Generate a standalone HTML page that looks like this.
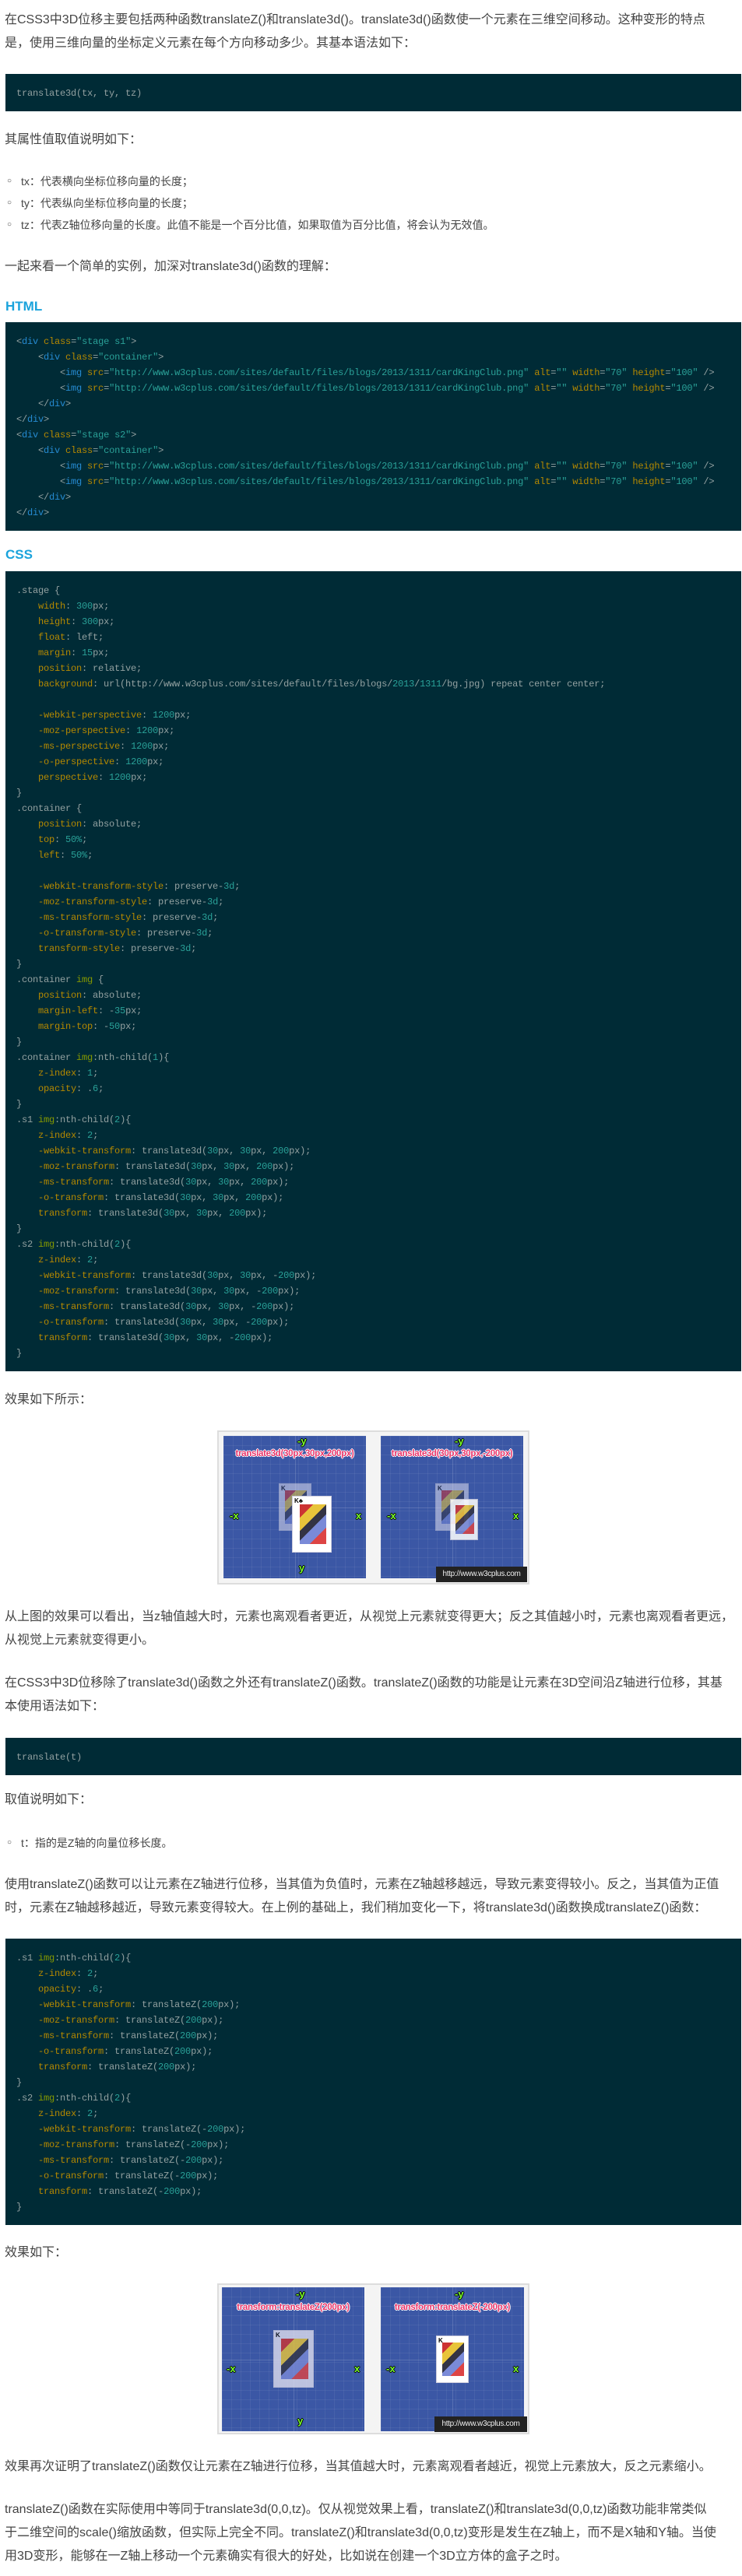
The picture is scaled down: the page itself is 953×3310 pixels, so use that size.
<!DOCTYPE html>
<html><head><meta charset="utf-8">
<style>
*{margin:0;padding:0;box-sizing:border-box}
html,body{width:953px;height:3310px;background:#fff;overflow:hidden}
body{position:relative;font-family:"Liberation Sans","Noto Sans CJK SC",sans-serif;color:#444}
.t{position:absolute;left:6px;font-size:16px;line-height:30px;white-space:nowrap}
.li{position:absolute;left:9px;font-size:14px;line-height:28px;white-space:nowrap}
.li span{display:inline-block;width:18px;font-size:10px;vertical-align:top}
.h{position:absolute;left:7px;font-size:17px;line-height:24px;font-weight:bold;color:#1aa3dc}
pre{position:absolute;left:7px;width:945px;background:#002b36;color:#93a1a1;font-family:"Liberation Mono",monospace;font-size:12px;letter-spacing:-0.2px;line-height:20px;padding:15px 14px 13px;overflow:hidden}
.p{color:#b58900}.v{color:#2aa198}.g{color:#268bd2}.s{color:#859900}
.fig{position:absolute;left:279px;width:401px;border:2px solid #ddd;background:#f4f4f4}
.pn{position:absolute;background:#3b57a5;overflow:visible;
background-image:linear-gradient(rgba(255,255,255,.06) 1px,transparent 1px),linear-gradient(90deg,rgba(255,255,255,.06) 1px,transparent 1px);background-size:12px 12px}
.pn:before{content:"";position:absolute;left:50%;top:0;bottom:0;width:1px;background:rgba(255,255,255,.15)}
.pn:after{content:"";position:absolute;top:50%;left:0;right:0;height:1px;background:rgba(255,255,255,.15)}
.ax{position:absolute;color:#7cff2a;font-weight:bold;font-size:13px;line-height:14px;text-shadow:-1px 0 #000,1px 0 #000,0 -1px #000,0 1px #000;z-index:3}
.ti{position:absolute;left:0;right:0;text-align:center;font-weight:bold;font-size:11.5px;letter-spacing:-.3px;color:#e8356a;text-shadow:-1px 0 #fff,1px 0 #fff,0 -1px #fff,0 1px #fff;z-index:3;white-space:nowrap}
.cd{position:absolute;background:#fff;border:1px solid #ccd;z-index:2;overflow:hidden}
.cd i{position:absolute;left:18%;right:12%;top:14%;bottom:14%;background:linear-gradient(135deg,#c33 0 20%,#e8c43a 20% 40%,#334 40% 55%,#7a8ad8 55% 75%,#d44 75%)}
.cd b{position:absolute;left:2px;top:1px;font-size:8px;color:#000}
.bk{opacity:.55;background:#dde}
.wm{position:absolute;background:#222;color:#eee;font-size:10px;line-height:20px;text-align:center;z-index:4;letter-spacing:-.3px}
</style></head><body>

<div class="t" style="top:11px">在CSS3中3D位移主要包括两种函数translateZ()和translate3d()。translate3d()函数使一个元素在三维空间移动。这种变形的特点<br>是，使用三维向量的坐标定义元素在每个方向移动多少。其基本语法如下：</div>

<pre style="top:95px">translate3d(tx, ty, tz)</pre>

<div class="t" style="top:165px">其属性值取值说明如下：</div>
<div class="li" style="top:219px"><span>○</span>tx：代表横向坐标位移向量的长度；<br><span>○</span>ty：代表纵向坐标位移向量的长度；<br><span>○</span>tz：代表Z轴位移向量的长度。此值不能是一个百分比值，如果取值为百分比值，将会认为无效值。</div>
<div class="t" style="top:328px">一起来看一个简单的实例，加深对translate3d()函数的理解：</div>

<div class="h" style="top:382px">HTML</div>
<pre style="top:414px">&lt;<span class="g">div</span> <span class="p">class</span>=<span class="v">"stage s1"</span>&gt;
    &lt;<span class="g">div</span> <span class="p">class</span>=<span class="v">"container"</span>&gt;
        &lt;<span class="g">img</span> <span class="p">src</span>=<span class="v">"http://www.w3cplus.com/sites/default/files/blogs/2013/1311/cardKingClub.png"</span> <span class="p">alt</span>=<span class="v">""</span> <span class="p">width</span>=<span class="v">"70"</span> <span class="p">height</span>=<span class="v">"100"</span> /&gt;
        &lt;<span class="g">img</span> <span class="p">src</span>=<span class="v">"http://www.w3cplus.com/sites/default/files/blogs/2013/1311/cardKingClub.png"</span> <span class="p">alt</span>=<span class="v">""</span> <span class="p">width</span>=<span class="v">"70"</span> <span class="p">height</span>=<span class="v">"100"</span> /&gt;
    &lt;/<span class="g">div</span>&gt;
&lt;/<span class="g">div</span>&gt;
&lt;<span class="g">div</span> <span class="p">class</span>=<span class="v">"stage s2"</span>&gt;
    &lt;<span class="g">div</span> <span class="p">class</span>=<span class="v">"container"</span>&gt;
        &lt;<span class="g">img</span> <span class="p">src</span>=<span class="v">"http://www.w3cplus.com/sites/default/files/blogs/2013/1311/cardKingClub.png"</span> <span class="p">alt</span>=<span class="v">""</span> <span class="p">width</span>=<span class="v">"70"</span> <span class="p">height</span>=<span class="v">"100"</span> /&gt;
        &lt;<span class="g">img</span> <span class="p">src</span>=<span class="v">"http://www.w3cplus.com/sites/default/files/blogs/2013/1311/cardKingClub.png"</span> <span class="p">alt</span>=<span class="v">""</span> <span class="p">width</span>=<span class="v">"70"</span> <span class="p">height</span>=<span class="v">"100"</span> /&gt;
    &lt;/<span class="g">div</span>&gt;
&lt;/<span class="g">div</span>&gt;</pre>

<div class="h" style="top:701px">CSS</div>
<pre style="top:734px">.stage {
    <span class="p">width</span>: <span class="v">300</span>px;
    <span class="p">height</span>: <span class="v">300</span>px;
    <span class="p">float</span>: left;
    <span class="p">margin</span>: <span class="v">15</span>px;
    <span class="p">position</span>: relative;
    <span class="p">background</span>: url(http://www.w3cplus.com/sites/default/files/blogs/<span class="v">2013</span>/<span class="v">1311</span>/bg.jpg) repeat center center;

    <span class="p">-webkit-perspective</span>: <span class="v">1200</span>px;
    <span class="p">-moz-perspective</span>: <span class="v">1200</span>px;
    <span class="p">-ms-perspective</span>: <span class="v">1200</span>px;
    <span class="p">-o-perspective</span>: <span class="v">1200</span>px;
    <span class="p">perspective</span>: <span class="v">1200</span>px;
}
.container {
    <span class="p">position</span>: absolute;
    <span class="p">top</span>: <span class="v">50%</span>;
    <span class="p">left</span>: <span class="v">50%</span>;

    <span class="p">-webkit-transform-style</span>: preserve-<span class="v">3d</span>;
    <span class="p">-moz-transform-style</span>: preserve-<span class="v">3d</span>;
    <span class="p">-ms-transform-style</span>: preserve-<span class="v">3d</span>;
    <span class="p">-o-transform-style</span>: preserve-<span class="v">3d</span>;
    <span class="p">transform-style</span>: preserve-<span class="v">3d</span>;
}
.container <span class="s">img</span> {
    <span class="p">position</span>: absolute;
    <span class="p">margin-left</span>: -<span class="v">35</span>px;
    <span class="p">margin-top</span>: -<span class="v">50</span>px;
}
.container <span class="s">img</span>:nth-child(<span class="v">1</span>){
    <span class="p">z-index</span>: <span class="v">1</span>;
    <span class="p">opacity</span>: .<span class="v">6</span>;
}
.s1 <span class="s">img</span>:nth-child(<span class="v">2</span>){
    <span class="p">z-index</span>: <span class="v">2</span>;
    <span class="p">-webkit-transform</span>: translate3d(<span class="v">30</span>px, <span class="v">30</span>px, <span class="v">200</span>px);
    <span class="p">-moz-transform</span>: translate3d(<span class="v">30</span>px, <span class="v">30</span>px, <span class="v">200</span>px);
    <span class="p">-ms-transform</span>: translate3d(<span class="v">30</span>px, <span class="v">30</span>px, <span class="v">200</span>px);
    <span class="p">-o-transform</span>: translate3d(<span class="v">30</span>px, <span class="v">30</span>px, <span class="v">200</span>px);
    <span class="p">transform</span>: translate3d(<span class="v">30</span>px, <span class="v">30</span>px, <span class="v">200</span>px);
}
.s2 <span class="s">img</span>:nth-child(<span class="v">2</span>){
    <span class="p">z-index</span>: <span class="v">2</span>;
    <span class="p">-webkit-transform</span>: translate3d(<span class="v">30</span>px, <span class="v">30</span>px, -<span class="v">200</span>px);
    <span class="p">-moz-transform</span>: translate3d(<span class="v">30</span>px, <span class="v">30</span>px, -<span class="v">200</span>px);
    <span class="p">-ms-transform</span>: translate3d(<span class="v">30</span>px, <span class="v">30</span>px, -<span class="v">200</span>px);
    <span class="p">-o-transform</span>: translate3d(<span class="v">30</span>px, <span class="v">30</span>px, -<span class="v">200</span>px);
    <span class="p">transform</span>: translate3d(<span class="v">30</span>px, <span class="v">30</span>px, -<span class="v">200</span>px);
}</pre>

<div class="t" style="top:1784px">效果如下所示：</div>

<div class="fig" style="top:1838px;height:198px"></div>
<div class="pn" style="left:287px;top:1845px;width:183px;height:183px">
  <div class="ax" style="left:95px;top:0">-y</div>
  <div class="ti" style="top:17px">translate3d(30px,30px,200px)</div>
  <div class="ax" style="left:8px;top:96px">-x</div>
  <div class="ax" style="left:170px;top:96px">x</div>
  <div class="ax" style="left:97px;top:163px">y</div>
  <div class="cd bk" style="left:71px;top:61px;width:42px;height:61px"><i></i><b>K</b></div>
  <div class="cd" style="left:88px;top:77px;width:51px;height:73px"><i></i><b>K♣</b></div>
</div>
<div class="pn" style="left:489px;top:1845px;width:183px;height:183px">
  <div class="ax" style="left:95px;top:0">-y</div>
  <div class="ti" style="top:17px">translate3d(30px,30px,-200px)</div>
  <div class="ax" style="left:8px;top:96px">-x</div>
  <div class="ax" style="left:170px;top:96px">x</div>
  <div class="cd bk" style="left:70px;top:61px;width:43px;height:61px"><i></i><b>K</b></div>
  <div class="cd" style="left:89px;top:81px;width:36px;height:53px;opacity:.85"><i></i></div>
  <div class="wm" style="left:71px;top:168px;width:117px">http://www.w3cplus.com</div>
</div>

<div class="t" style="top:2063px">从上图的效果可以看出，当z轴值越大时，元素也离观看者更近，从视觉上元素就变得更大；反之其值越小时，元素也离观看者更远，<br>从视觉上元素就变得更小。</div>
<div class="t" style="top:2148px">在CSS3中3D位移除了translate3d()函数之外还有translateZ()函数。translateZ()函数的功能是让元素在3D空间沿Z轴进行位移，其基<br>本使用语法如下：</div>

<pre style="top:2233px">translate(t)</pre>

<div class="t" style="top:2298px">取值说明如下：</div>
<div class="li" style="top:2354px"><span>○</span>t：指的是Z轴的向量位移长度。</div>
<div class="t" style="top:2407px">使用translateZ()函数可以让元素在Z轴进行位移，当其值为负值时，元素在Z轴越移越远，导致元素变得较小。反之，当其值为正值<br>时，元素在Z轴越移越近，导致元素变得较大。在上例的基础上，我们稍加变化一下，将translate3d()函数换成translateZ()函数：</div>

<pre style="top:2491px">.s1 <span class="s">img</span>:nth-child(<span class="v">2</span>){
    <span class="p">z-index</span>: <span class="v">2</span>;
    <span class="p">opacity</span>: .<span class="v">6</span>;
    <span class="p">-webkit-transform</span>: translateZ(<span class="v">200</span>px);
    <span class="p">-moz-transform</span>: translateZ(<span class="v">200</span>px);
    <span class="p">-ms-transform</span>: translateZ(<span class="v">200</span>px);
    <span class="p">-o-transform</span>: translateZ(<span class="v">200</span>px);
    <span class="p">transform</span>: translateZ(<span class="v">200</span>px);
}
.s2 <span class="s">img</span>:nth-child(<span class="v">2</span>){
    <span class="p">z-index</span>: <span class="v">2</span>;
    <span class="p">-webkit-transform</span>: translateZ(-<span class="v">200</span>px);
    <span class="p">-moz-transform</span>: translateZ(-<span class="v">200</span>px);
    <span class="p">-ms-transform</span>: translateZ(-<span class="v">200</span>px);
    <span class="p">-o-transform</span>: translateZ(-<span class="v">200</span>px);
    <span class="p">transform</span>: translateZ(-<span class="v">200</span>px);
}</pre>

<div class="t" style="top:2880px">效果如下：</div>

<div class="fig" style="top:2934px;height:194px"></div>
<div class="pn" style="left:285px;top:2939px;width:183px;height:185px">
  <div class="ax" style="left:95px;top:2px">-y</div>
  <div class="ti" style="top:20px">transform:translateZ(200px)</div>
  <div class="ax" style="left:6px;top:98px">-x</div>
  <div class="ax" style="left:170px;top:98px">x</div>
  <div class="ax" style="left:97px;top:165px">y</div>
  <div class="cd bk" style="left:66px;top:55px;width:52px;height:74px;opacity:.8"><i></i><b>K</b></div>
</div>
<div class="pn" style="left:489px;top:2939px;width:184px;height:185px">
  <div class="ax" style="left:95px;top:2px">-y</div>
  <div class="ti" style="top:20px">transform:translateZ(-200px)</div>
  <div class="ax" style="left:7px;top:98px">-x</div>
  <div class="ax" style="left:170px;top:98px">x</div>
  <div class="cd" style="left:71px;top:62px;width:42px;height:61px"><i></i><b>K</b></div>
  <div class="wm" style="left:69px;top:166px;width:119px">http://www.w3cplus.com</div>
</div>

<div class="t" style="top:3155px">效果再次证明了translateZ()函数仅让元素在Z轴进行位移，当其值越大时，元素离观看者越近，视觉上元素放大，反之元素缩小。</div>
<div class="t" style="top:3210px">translateZ()函数在实际使用中等同于translate3d(0,0,tz)。仅从视觉效果上看，translateZ()和translate3d(0,0,tz)函数功能非常类似<br>于二维空间的scale()缩放函数，但实际上完全不同。translateZ()和translate3d(0,0,tz)变形是发生在Z轴上，而不是X轴和Y轴。当使<br>用3D变形，能够在一Z轴上移动一个元素确实有很大的好处，比如说在创建一个3D立方体的盒子之时。</div>

</body></html>
